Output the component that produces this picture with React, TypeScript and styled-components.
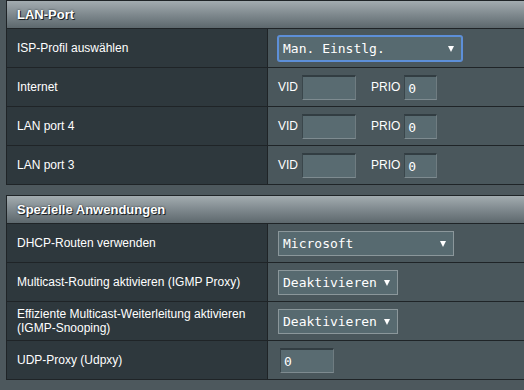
import React from 'react';
import styled, { createGlobalStyle } from 'styled-components';

const GlobalStyle = createGlobalStyle`
  html, body {
    margin: 0;
    padding: 0;
    background: #4d585d;
    overflow: hidden;
  }
  body {
    font-family: 'Liberation Sans', Arial, sans-serif;
  }
`;

type Field =
  | { kind: 'select'; value: string; width: number; focused?: boolean }
  | { kind: 'vlan' }
  | { kind: 'input'; value: string };

interface Row {
  label: React.ReactNode;
  field: Field;
}

const lanRows: Row[] = [
  { label: 'ISP-Profil auswählen', field: { kind: 'select', value: 'Man. Einstlg.', width: 184, focused: true } },
  { label: 'Internet', field: { kind: 'vlan' } },
  { label: 'LAN port 4', field: { kind: 'vlan' } },
  { label: 'LAN port 3', field: { kind: 'vlan' } },
];

const appRows: Row[] = [
  { label: 'DHCP-Routen verwenden', field: { kind: 'select', value: 'Microsoft', width: 176 } },
  { label: 'Multicast-Routing aktivieren (IGMP Proxy)', field: { kind: 'select', value: 'Deaktivieren', width: 120 } },
  {
    label: (
      <>
        Effiziente Multicast-Weiterleitung aktivieren
        <br />
        (IGMP-Snooping)
      </>
    ),
    field: { kind: 'select', value: 'Deaktivieren', width: 120 },
  },
  { label: 'UDP-Proxy (Udpxy)', field: { kind: 'input', value: '0' } },
];

const renderField = (field: Field) => {
  if (field.kind === 'select') {
    return (
      <SelectBox $width={field.width} $focused={field.focused}>
        <span>{field.value}</span>
        <Arrow />
      </SelectBox>
    );
  }
  if (field.kind === 'vlan') {
    return (
      <>
        <FieldLabel>VID</FieldLabel>
        <TextInput $width={54} />
        <FieldLabel $gap={15}>PRIO</FieldLabel>
        <TextInput $width={33}>0</TextInput>
      </>
    );
  }
  return (
    <TextInput $width={54} $offset={2}>
      {field.value}
    </TextInput>
  );
};

const Section: React.FC<{ title: string; rows: Row[] }> = ({ title, rows }) => (
  <Table>
    <Header>{title}</Header>
    {rows.map((row, i) => (
      <TableRow key={i}>
        <LabelCell>{row.label}</LabelCell>
        <ValueCell>{renderField(row.field)}</ValueCell>
      </TableRow>
    ))}
  </Table>
);

const App: React.FC = () => {
  return (
    <Page>
      <GlobalStyle />
      <Section title="LAN-Port" rows={lanRows} />
      <Section title="Spezielle Anwendungen" rows={appRows} />
    </Page>
  );
};

const Page = styled.div`
  box-sizing: border-box;
  display: flex;
  flex-direction: column;
  gap: 10px;
  width: 524px;
  height: 390px;
  padding-left: 6px;
`;

const Table = styled.section`
  border: 1px solid #1f2427;
  border-right: none;
  background: #1f2427;
`;

const Header = styled.div`
  height: 27px;
  display: flex;
  align-items: center;
  padding-left: 10px;
  background: linear-gradient(to bottom, #a3acb0 0%, #7f898e 50%, #5d686d 100%);
  color: #ffffff;
  font-size: 13px;
  font-weight: bold;
  text-shadow: 1px 1px 0 #1c2225, 0 0 2px #2a3236;
  border-bottom: 1px solid #1f2427;
`;

const TableRow = styled.div`
  display: grid;
  grid-template-columns: 260px 1fr;
  column-gap: 1px;
  height: 38px;
  border-bottom: 1px solid #1f2427;

  &:last-child {
    border-bottom: none;
  }
`;

const LabelCell = styled.div`
  display: flex;
  align-items: center;
  padding-left: 10px;
  background: #2e383d;
  color: #ffffff;
  font-size: 12px;
  line-height: 14px;
`;

const ValueCell = styled.div`
  display: flex;
  align-items: center;
  padding-left: 10px;
  background: #4a575c;
`;

const SelectBox = styled.div<{ $width: number; $focused?: boolean }>`
  box-sizing: border-box;
  width: ${({ $width }) => $width}px;
  height: 25px;
  display: flex;
  align-items: center;
  justify-content: space-between;
  padding: 0 7px 0 4px;
  background: #576a70;
  border: 1px solid ${({ $focused }) => ($focused ? '#5d8fd8' : '#8b979b')};
  border-radius: ${({ $focused }) => ($focused ? '2px' : '0')};
  box-shadow: ${({ $focused }) => ($focused ? '0 0 0 1px #5d8fd8' : 'none')};
  color: #ffffff;
  font-family: 'DejaVu Sans Mono', 'Liberation Mono', monospace;
  font-size: 13px;
`;

const Arrow = styled.span`
  width: 0;
  height: 0;
  border-left: 3.5px solid transparent;
  border-right: 3.5px solid transparent;
  border-top: 6px solid #ffffff;
  margin-top: 1px;
`;

const FieldLabel = styled.span<{ $gap?: number }>`
  margin-left: ${({ $gap }) => $gap ?? 0}px;
  margin-right: 4px;
  color: #ffffff;
  font-size: 12px;
`;

const TextInput = styled.div<{ $width: number; $offset?: number }>`
  box-sizing: border-box;
  width: ${({ $width }) => $width}px;
  height: 25px;
  margin-left: ${({ $offset }) => $offset ?? 0}px;
  display: flex;
  align-items: center;
  padding: 2px 0 0 3px;
  background: #596b71;
  border-top: 2px solid #323d42;
  border-left: 1px solid #3a464b;
  border-bottom: 1px solid #7e8b90;
  border-right: 1px solid #6f7c81;
  color: #ffffff;
  font-family: 'DejaVu Sans Mono', 'Liberation Mono', monospace;
  font-size: 13px;
`;

export default App;
